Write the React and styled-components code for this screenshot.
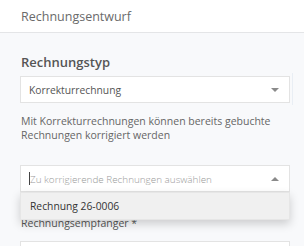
import React from 'react';
import styled, { createGlobalStyle } from 'styled-components';

const GlobalStyle = createGlobalStyle`
    body {
        margin: 0;
        font-family: 'Open Sans', 'Liberation Sans', sans-serif;
    }
`;

export default function App() {
    return (
        <>
            <GlobalStyle />
            <Page>
                <Header>Rechnungsentwurf</Header>

                <Content>
                    <SectionTitle>Rechnungstyp</SectionTitle>
                    <Row>
                        <Select>
                            <SelectValue>Korrekturrechnung</SelectValue>
                            <Caret />
                        </Select>
                        <Divider />
                    </Row>
                    <Helper>
                        Mit Korrekturrechnungen können bereits gebuchte Rechnungen korrigiert werden
                    </Helper>

                    <Combo>
                        <Select>
                            <Placeholder>
                                <Cursor />
                                Zu korrigierende Rechnungen auswählen
                            </Placeholder>
                            <Caret up />
                        </Select>
                        <Menu>
                            <MenuItem>Rechnung 26-0006</MenuItem>
                        </Menu>
                    </Combo>

                    <Label>Rechnungsempfänger *</Label>
                    <Input />
                </Content>
            </Page>
        </>
    );
}

const Page = styled.div`
    width: 304px;
    height: 246px;
    overflow: hidden;
    background-color: #f8f9fb;
`;

const Header = styled.div`
    height: 32px;
    padding-left: 21px;

    display: flex;
    align-items: center;

    background-color: #fff;
    border-bottom: 1px solid #e4e5e7;

    color: #6a6a6a;
    font-size: 12.5px;
`;

const Content = styled.div`
    padding: 19px 0 0 20px;
`;

const SectionTitle = styled.div`
    margin-left: 1px;

    color: #555;
    font-size: 13px;
    font-weight: 600;
    line-height: 20px;
`;

const Row = styled.div`
    margin-top: 4px;
    display: flex;
`;

const Divider = styled.div`
    width: 1px;
    height: 32px;
    margin: -3px 0 0 2px;
    background-color: #e9eef4;
`;

const Select = styled.div`
    width: 270px;
    height: 27px;
    box-sizing: border-box;
    padding: 0 10px 0 8px;

    display: flex;
    align-items: center;
    justify-content: space-between;

    background-color: #fff;
    border: 1px solid #e3e3e3;
`;

const SelectValue = styled.span`
    color: #555;
    font-size: 10.3px;
`;

const Placeholder = styled.span`
    display: flex;
    align-items: center;

    color: #999;
    font-size: 9.9px;
    font-weight: 300;
`;

const Cursor = styled.span`
    width: 1px;
    height: 13px;
    background-color: #444;
`;

const Caret = styled.span`
    width: 0;
    height: 0;
    border-left: 4px solid transparent;
    border-right: 4px solid transparent;
    border-top: ${(p) => (p.up ? '0' : '4px solid #8a8a8a')};
    border-bottom: ${(p) => (p.up ? '4px solid #8a8a8a' : '0')};
`;

const Helper = styled.p`
    width: 262px;
    margin: 10px 0 0 1px;

    color: #666;
    font-size: 10.5px;
    line-height: 13.5px;
`;

const Combo = styled.div`
    position: relative;
    margin-top: 23px;
`;

const Menu = styled.div`
    width: 270px;
    height: 28px;
    box-sizing: border-box;
    padding-left: 9px;

    position: absolute;
    top: 100%;
    left: 0;
    z-index: 2;

    display: flex;
    align-items: center;

    background-color: #f0f0f0;
    border: 1px solid #e6e6e6;
    box-shadow: 0 4px 10px rgba(0, 0, 0, 0.18);
`;

const MenuItem = styled.div`
    color: #333;
    font-size: 10.3px;
`;

const Label = styled.div`
    margin: 23px 0 0 1px;

    color: #555;
    font-size: 10.5px;
    line-height: 16px;
`;

const Input = styled.div`
    width: 270px;
    height: 27px;
    margin-top: 10px;
    box-sizing: border-box;

    background-color: #fff;
    border: 1px solid #e3e3e3;
`;
